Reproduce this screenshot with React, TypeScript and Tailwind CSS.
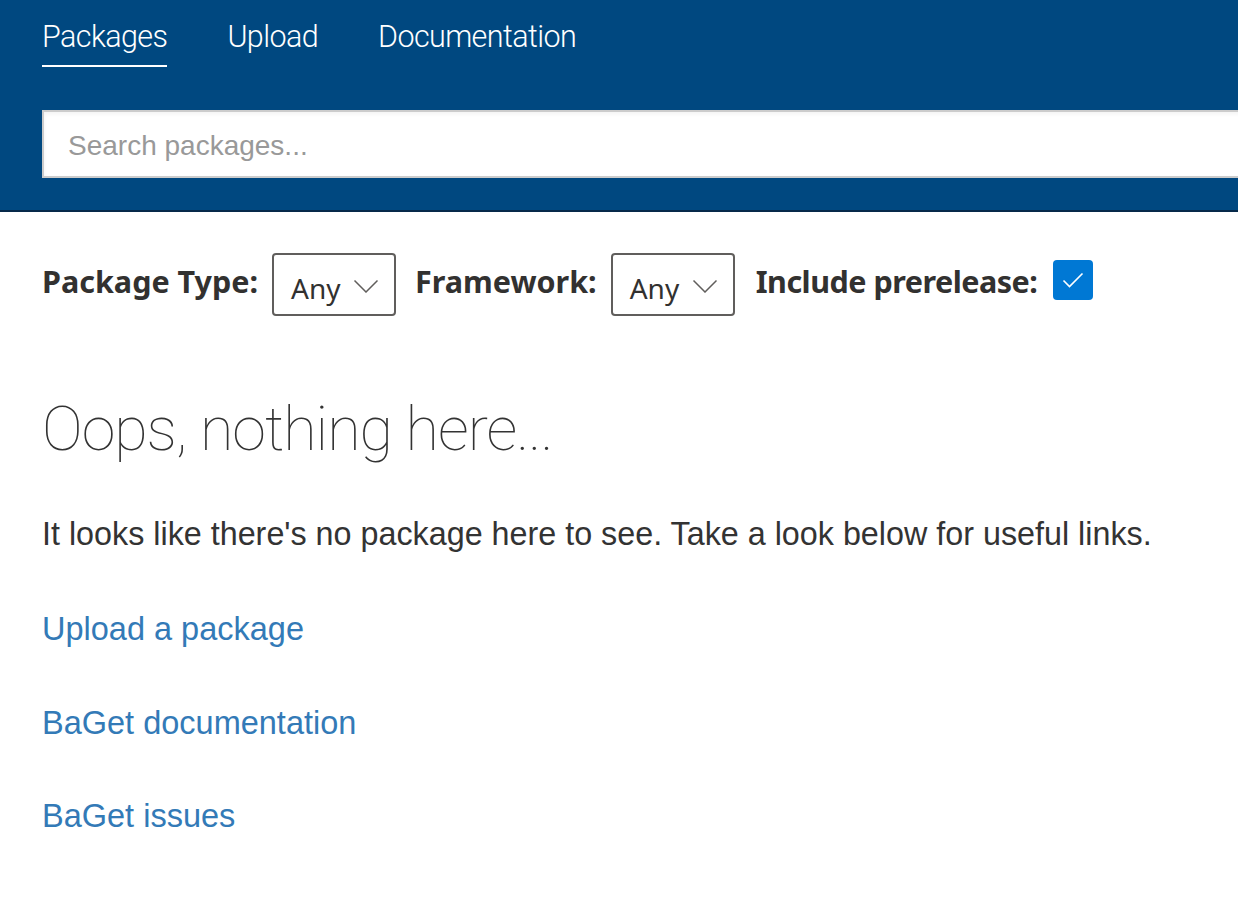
import React, { useState } from 'react';

const navItems = ['Packages', 'Upload', 'Documentation'];

const links = ['Upload a package', 'BaGet documentation', 'BaGet issues'];

function Dropdown({ value }: { value: string }) {
  return (
    <div className="flex h-[63px] w-[124px] items-center justify-between rounded-[4px] border-2 border-[#605e5c] pl-[17px] pr-[15px]">
      <span className="mt-[6px] text-[28px] text-[#323130]">{value}</span>
      <svg width="26" height="14" viewBox="0 0 26 14" fill="none" className="mt-[2px]">
        <path d="M1.5 1.5l11.5 11.5L24.5 1.5" stroke="#605e5c" strokeWidth="1.5" />
      </svg>
    </div>
  );
}

export default function App() {
  const [active] = useState('Packages');
  const [prerelease, setPrerelease] = useState(true);

  return (
    <div className="min-h-screen overflow-hidden bg-white">
      <header className="h-[212px] border-b-2 border-[#06294a] bg-[#004880] pl-[42px]">
        <nav className="flex h-[110px] items-start gap-[60px] pt-[16px] font-['Roboto',sans-serif]">
          {navItems.map((item) => (
            <div key={item} className="flex flex-col">
              <span className="text-[30.5px] font-light leading-[42px] tracking-[-0.6px] text-white">
                {item}
              </span>
              {item === active && <div className="mt-[7px] h-[2px] bg-white" />}
            </div>
          ))}
        </nav>
        <div className="h-[68px] w-[1300px] border-2 border-[#cccccc] bg-white pl-[24px] pt-[4px] shadow-inner">
          <input
            placeholder="Search packages..."
            className="h-full w-full bg-transparent font-['Liberation_Sans',sans-serif] text-[28px] text-[#333] outline-none placeholder:text-[#999]"
          />
        </div>
      </header>

      <main className="px-[42px]">
        <div className="mt-[41px] flex items-center font-['Noto_Sans',sans-serif] text-[#323130]">
          <span className="mb-[6px] mr-[14px] text-[30.5px] font-bold">Package Type:</span>
          <Dropdown value="Any" />
          <span className="mb-[6px] ml-[19px] mr-[14px] text-[30.5px] font-bold">Framework:</span>
          <Dropdown value="Any" />
          <span className="mb-[6px] ml-[21px] mr-[16px] text-[30.5px] font-bold tracking-[-0.5px]">
            Include prerelease:
          </span>
          <button
            onClick={() => setPrerelease(!prerelease)}
            className="mb-[10px] flex h-[40px] w-[40px] items-center justify-center rounded-[4px] bg-[#0078d4]"
          >
            {prerelease && (
              <svg width="22" height="16" viewBox="0 0 22 16" fill="none">
                <path d="M1.5 8.5l6 6L20.5 1.5" stroke="white" strokeWidth="1.6" />
              </svg>
            )}
          </button>
        </div>

        <h1 className="mt-[73px] font-['Roboto',sans-serif] text-[61px] font-thin leading-[80px] tracking-[-1px] text-[#333]">
          Oops, nothing here...
        </h1>

        <p className="mt-[45px] font-['Liberation_Sans',sans-serif] text-[32.3px] leading-[40px] text-[#333]">
          It looks like there's no package here to see. Take a look below for useful links.
        </p>

        <div className="mt-[55px] flex flex-col gap-[53.5px] font-['Liberation_Sans',sans-serif]">
          {links.map((l) => (
            <a key={l} href="#" className="text-[32.5px] leading-[40px] text-[#337ab7]">
              {l}
            </a>
          ))}
        </div>
      </main>
    </div>
  );
}
